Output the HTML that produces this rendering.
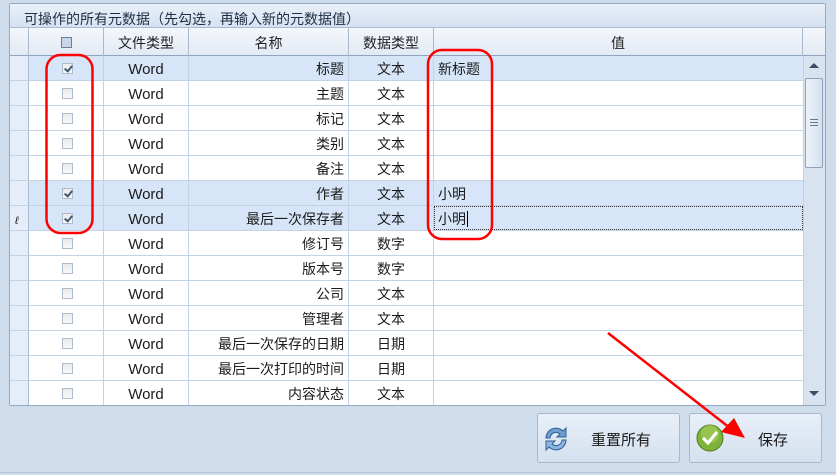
<!DOCTYPE html>
<html><head><meta charset="utf-8"><style>
*{margin:0;padding:0;box-sizing:border-box}
body{width:836px;height:475px;background:#cfdcec;position:relative;overflow:hidden;font-family:"Liberation Sans","Noto Sans CJK SC",sans-serif;font-size:14px;color:#1b1b1b}
.abs{position:absolute}
#grp{left:9px;top:3px;width:817px;height:403px;border:1px solid #95a9c4;border-radius:2px;background:#fff}
#title{left:10px;top:4px;width:815px;height:24px;background:linear-gradient(#e9f0f9,#d6e2f1);border-bottom:1px solid #a9bbd3;font-size:14px;padding:5px 0 0 14px;color:#1e2e44}
#hdr{left:10px;top:28px;width:815px;height:28px;background:linear-gradient(#f4f7fb,#e3eaf4);border-bottom:1px solid #8fa3bf}
.hc{position:absolute;top:0;height:28px;line-height:30px;text-align:center;border-right:1px solid #a9b9cf;font-size:14px;color:#222}
.row{position:absolute;left:10px;width:793px;height:25px;border-bottom:1px solid #c3d3e6;background:#fff}
.row.sel{background:#d6e6f8}
.c{position:absolute;top:0;height:24px;line-height:27px;border-right:1px solid #c3d3e6}
.rh{left:0;width:19px;background:#e4edf8;border-right:1px solid #a9b9cf}
.cb{position:absolute;left:33px;top:7px;width:11px;height:11px;border:1px solid #aebbcb;background:linear-gradient(#eaeaea,#f8f8f8)}
.cb.on::after{content:"";position:absolute;left:3px;top:0px;width:3px;height:6px;border:solid #3f5772;border-width:0 2px 2px 0;transform:rotate(40deg)}
.btn{position:absolute;top:413px;height:50px;border:1px solid #a8b8cd;border-radius:3px;background:linear-gradient(#e8eff8,#d5e1ef)}
</style></head><body>
<div id="grp" class="abs"></div>
<div id="title" class="abs">可操作的所有元数据（先勾选，再输入新的元数据值）</div>
<div id="hdr" class="abs">
<div class="hc" style="left:0;width:19px"></div>
<div class="hc" style="left:19px;width:75px"><span style="display:inline-block;width:11px;height:11px;border:1px solid #6d7f98;background:#c9d6e8;vertical-align:middle;margin-top:-3px"></span></div>
<div class="hc" style="left:94px;width:85px">文件类型</div>
<div class="hc" style="left:179px;width:160px">名称</div>
<div class="hc" style="left:339px;width:85px">数据类型</div>
<div class="hc" style="left:424px;width:369px">值</div>
</div>
<div id="rows"></div>
<div class="abs" style="left:803px;top:56px;width:22px;height:349px;background:#d9e3f0;border-left:1px solid #c3d0e0"></div>
<div class="abs" style="left:809px;top:63px;width:0;height:0;border:5px solid transparent;border-bottom:5px solid #3d4c66;border-top:0"></div>
<div class="abs" style="left:805px;top:78px;width:18px;height:90px;border:1px solid #8fa2bd;border-radius:2px;background:linear-gradient(90deg,#eef3fa,#d5e0ee)"></div>
<div class="abs" style="left:810px;top:119px;width:8px;height:7px;border-top:1px solid #66788f;border-bottom:1px solid #66788f"><div style="margin-top:2px;border-top:1px solid #66788f"></div></div>
<div class="abs" style="left:809px;top:391px;width:0;height:0;border:5px solid transparent;border-top:5px solid #3d4c66;border-bottom:0"></div>
<div class="abs" style="left:0;top:472px;width:836px;height:1px;background:#b9c4d1"></div>
<div class="btn" style="left:537px;width:143px">
<svg class="abs" style="left:2px;top:10px" width="32" height="30" viewBox="0 0 32 30"><path d="M6 14a10 10 0 0 1 17-7l3-3v9h-9l3-3a6 6 0 0 0-10 4z" fill="#6f9fd0" stroke="#2f5f95"/><path d="M26 16a10 10 0 0 1-17 7l-3 3v-9h9l-3 3a6 6 0 0 0 10-4z" fill="#8db6df" stroke="#2f5f95"/></svg>
<div class="abs" style="left:53px;top:15px;font-size:15px">重置所有</div></div>
<div class="btn" style="left:689px;width:133px">
<svg class="abs" style="left:5px;top:9px" width="30" height="30" viewBox="0 0 30 30"><circle cx="15" cy="15" r="13" fill="#7fb33a" stroke="#4f7a1f"/><circle cx="15" cy="11" r="9" fill="#a9d15f" opacity=".6"/><path d="M8 15l5 5 9-11" fill="none" stroke="#fff" stroke-width="3"/></svg>
<div class="abs" style="left:68px;top:15px;font-size:15px">保存</div></div>
<svg class="abs" style="left:0;top:0" width="836" height="475">
<rect x="46.5" y="55" width="46" height="178" rx="14" fill="none" stroke="#f00" stroke-width="2.5"/>
<rect x="428" y="50" width="64" height="189" rx="14" fill="none" stroke="#f00" stroke-width="2.5"/>
<line x1="608" y1="333" x2="730" y2="428" stroke="#f00" stroke-width="2.5"/>
<polygon points="745,438 721,432 734,418" fill="#f00"/>
</svg>
<script>
var d=[["标题","文本","新标题",1],["主题","文本","",0],["标记","文本","",0],["类别","文本","",0],["备注","文本","",0],["作者","文本","小明",1],["最后一次保存者","文本","小明",1],["修订号","数字","",0],["版本号","数字","",0],["公司","文本","",0],["管理者","文本","",0],["最后一次保存的日期","日期","",0],["最后一次打印的时间","日期","",0],["内容状态","文本","",0]];
var h="";d.forEach(function(r,i){var t=56+i*25;var hh=Math.min(25,405-t);
h+='<div class="row'+(r[3]?' sel':'')+'" style="top:'+t+'px;height:'+hh+'px'+(i==13?';border-bottom:0':'')+'">'+
'<div class="c rh">'+(i==6?'<span style="font-size:11px;font-style:italic;padding-left:5px">ℓ</span>':'')+'</div>'+
'<div class="c" style="left:19px;width:75px"><div class="cb'+(r[3]?' on':'')+'"></div></div>'+
'<div class="c" style="left:94px;width:85px;text-align:center;font-size:15px">Word</div>'+
'<div class="c" style="left:179px;width:160px;text-align:right;padding-right:4px">'+r[0]+'</div>'+
'<div class="c" style="left:339px;width:85px;text-align:center">'+r[1]+'</div>'+
'<div class="c" style="left:424px;width:369px;padding-left:4px;border-right:0'+(i==6?';outline:1px dotted #333;outline-offset:-1px':'')+'">'+r[2]+(i==6?'<span style="border-left:1px solid #000;margin-left:1px"></span>':'')+'</div></div>';});
document.getElementById("rows").innerHTML=h;
</script>
</body></html>
